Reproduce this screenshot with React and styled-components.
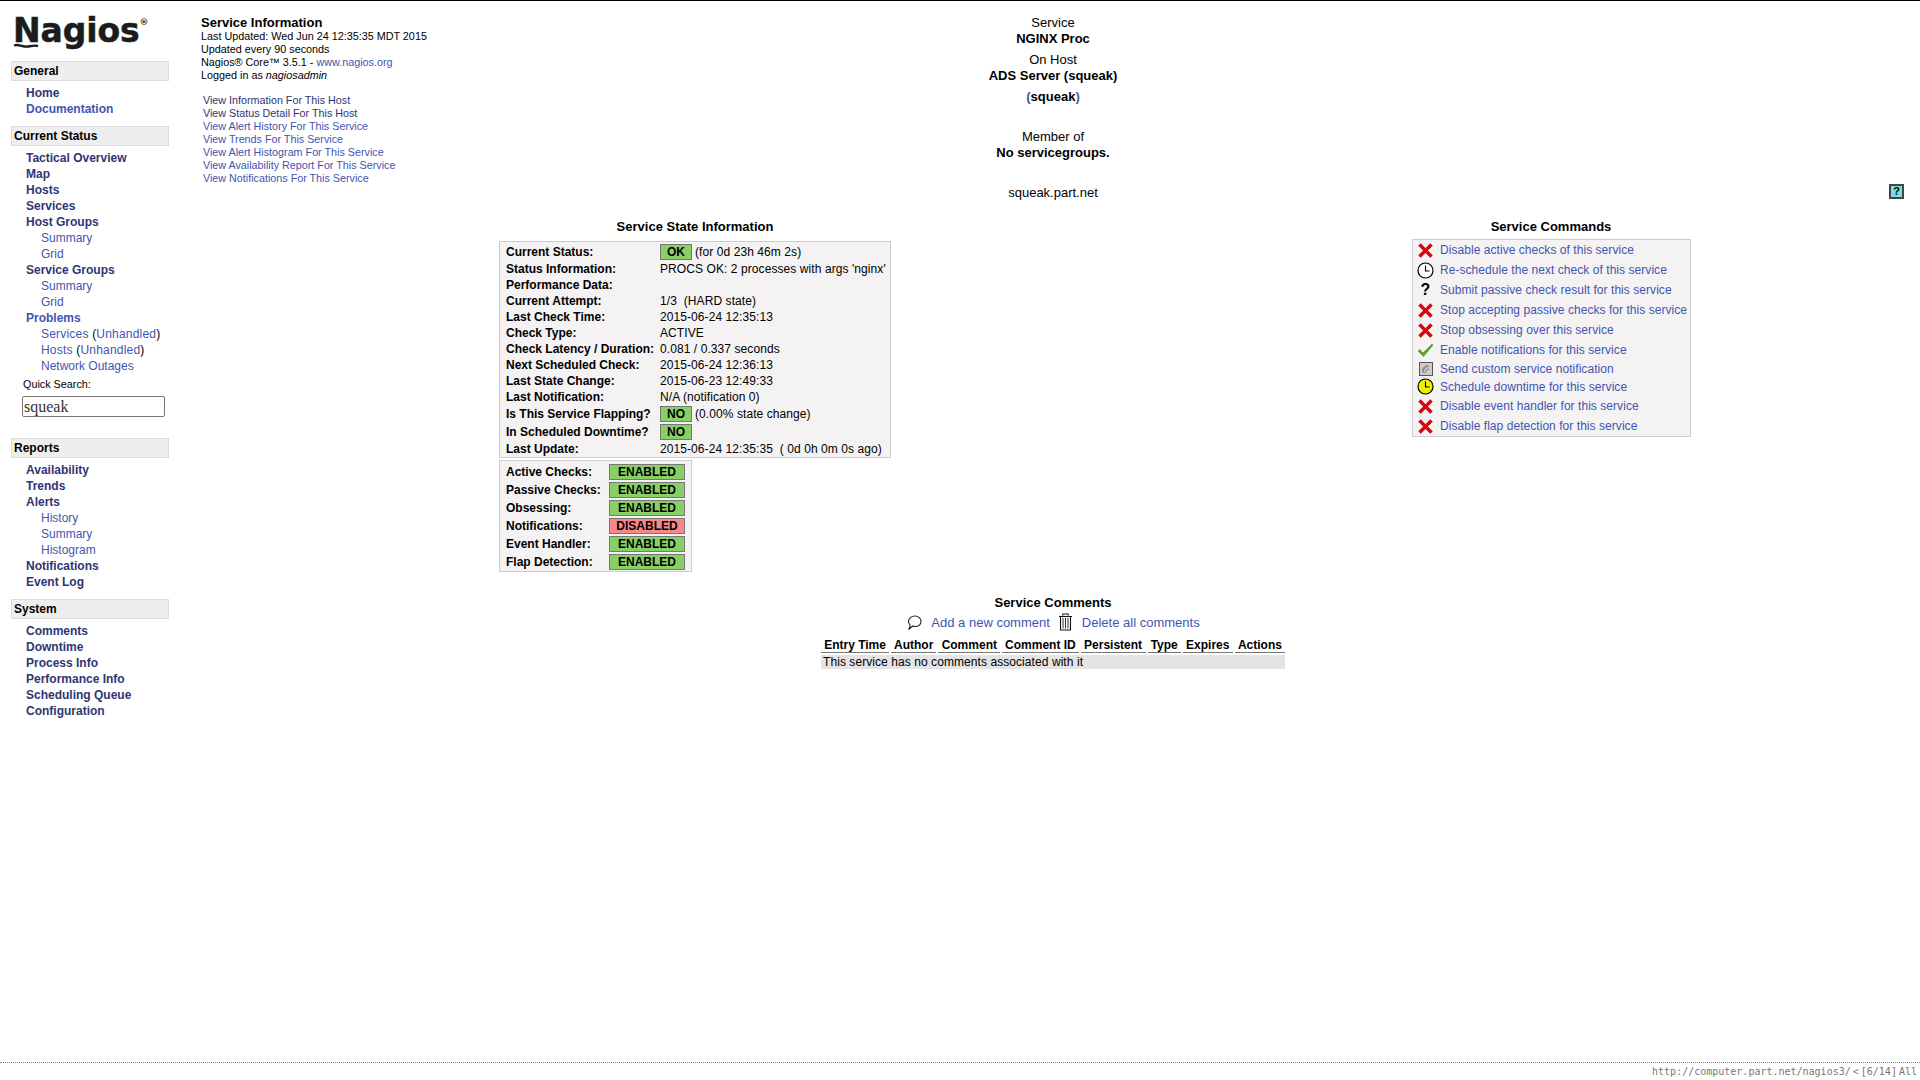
import React from "react";
import styled, { createGlobalStyle } from "styled-components";

const VISITED = "#2f3573";
const LINK = "#3f55b0";

const GlobalStyle = createGlobalStyle`
  html, body {
    margin: 0;
    padding: 0;
    background: #fff;
    overflow: hidden;
  }
  body {
    font-family: "Liberation Sans", Arial, sans-serif;
    color: #000;
  }
  * {
    box-sizing: border-box;
  }
`;

const Page = styled.div`
  height: 1080px;
  display: flex;
  flex-direction: column;
  border-top: 1px solid #000;
`;

const Body = styled.div`
  flex: 1;
  display: flex;
  min-height: 0;
`;

const Sidebar = styled.nav`
  width: 190px;
  flex: none;
  padding: 13px 0 0 11px;
`;

const LogoWrap = styled.div`
  position: relative;
  height: 47px;
  width: 150px;
`;

const LogoText = styled.div`
  font-family: "DejaVu Sans", sans-serif;
  font-weight: 700;
  font-size: 33px;
  line-height: 34px;
  letter-spacing: -0.1px;
  padding-left: 2px;
  color: #1c1c1c;
  -webkit-text-stroke: 0.5px #1c1c1c;
  sup {
    font-size: 9px;
    line-height: 0;
    letter-spacing: 0;
    vertical-align: 17px;
    -webkit-text-stroke: 0;
  }
`;

const LogoSwoosh = styled.svg`
  position: absolute;
  left: 2px;
  top: 28px;
`;

const NavHeader = styled.div`
  width: 158px;
  height: 20px;
  background: #eee;
  border: 1px solid #ddd;
  font-size: 12px;
  font-weight: 700;
  line-height: 18px;
  padding-left: 2px;
  margin-top: ${(p) => p.$top || 0}px;
`;

const NavList = styled.div`
  padding-top: 4px;
`;

const NavRow = styled.div`
  height: 16px;
  line-height: 16px;
  font-size: 12px;
  padding-left: ${(p) => (p.$sub ? 30 : 15)}px;
  font-weight: ${(p) => (p.$sub ? 400 : 700)};
  color: ${(p) => (p.$fresh ? LINK : VISITED)};
  letter-spacing: ${(p) => (p.$wide ? "0.2px" : "0")};
  white-space: nowrap;
`;

const Paren = styled.span`
  color: #000;
`;

const Fresh = styled.span`
  color: ${LINK};
`;

const SearchLabel = styled.div`
  font-size: 10.8px;
  line-height: 12px;
  padding: 4px 0 0 12px;
`;

const SearchInput = styled.input`
  display: block;
  width: 143px;
  height: 21px;
  margin: 6px 0 0 11px;
  padding: 0 1px;
  border: 1px solid #777;
  border-radius: 2px;
  background: #fff;
  font-family: "Liberation Serif", serif;
  font-size: 16px;
  color: #333;
`;

const Main = styled.main`
  flex: 1;
  min-width: 0;
`;

const TopRow = styled.div`
  display: grid;
  grid-template-columns: 1fr 1fr;
  height: 212px;
  position: relative;
  width: 1726px;
`;

const InfoPanel = styled.div`
  padding: 15px 0 0 11px;
  grid-column: 1 / 3;
  grid-row: 1;
`;

const InfoTitle = styled.div`
  font-size: 13px;
  font-weight: 700;
  line-height: 14px;
`;

const InfoLine = styled.div`
  font-size: 10.8px;
  line-height: 13px;
  white-space: nowrap;
  i {
    font-style: italic;
  }
`;

const ViewLinks = styled.div`
  margin: 12px 0 0 2px;
`;

const ViewLink = styled.div`
  font-size: 10.75px;
  line-height: 13px;
  color: ${(p) => (p.$fresh ? LINK : VISITED)};
`;

const HostPanel = styled.div`
  grid-column: 1 / 3;
  grid-row: 1;
  text-align: center;
  padding-top: 14px;
  font-size: 13px;
`;

const HostLine = styled.div`
  line-height: 16px;
  margin-top: ${(p) => p.$top || 0}px;
  font-weight: ${(p) => (p.$bold ? 700 : 400)};
`;

const HelpIcon = styled.div`
  position: absolute;
  right: 12px;
  top: 183px;
  width: 15px;
  height: 15px;
  border: 2px solid #444;
  background: #76dde0;
  color: #000;
  font-size: 11px;
  font-weight: 700;
  line-height: 11px;
  text-align: center;
`;

const StateRow = styled.div`
  display: grid;
  grid-template-columns: 1010px 702px;
  height: 383px;
`;

const StateColumn = styled.section`
  display: flex;
  flex-direction: column;
  align-items: flex-start;
`;

const SectionTitle = styled.div`
  align-self: stretch;
  text-align: center;
  font-size: 13px;
  font-weight: 700;
  line-height: 14px;
  padding-top: 7px;
`;

const GreyBox = styled.div`
  background: #f4f2f2;
  border: 1px solid #ccc;
  margin-left: ${(p) => p.$left}px;
  margin-top: ${(p) => p.$top || 0}px;
  width: ${(p) => p.$width}px;
  height: ${(p) => p.$height}px;
  padding: ${(p) => p.$pad || "0 0 0 6px"};
  font-size: 12px;
`;

const KeyRow = styled.div`
  display: grid;
  grid-template-columns: ${(p) => p.$cols || "154px 1fr"};
  align-items: center;
  height: ${(p) => p.$h || 16}px;
  white-space: nowrap;
`;

const KeyLabel = styled.span`
  font-weight: 700;
  color: #000;
`;

const KeyValue = styled.span`
  display: flex;
  align-items: center;
  gap: 3px;
  white-space: pre;
  letter-spacing: 0.08px;
`;

const Badge = styled.span`
  display: inline-block;
  width: ${(p) => p.$w || 32}px;
  height: 16px;
  line-height: 14px;
  text-align: center;
  font-weight: 700;
  font-size: 12px;
  letter-spacing: 0;
  border: 1px solid #777;
  background: ${(p) => (p.$bad ? "#f88888" : "#88d066")};
`;

const CommandRow = styled.div`
  display: flex;
  align-items: center;
  height: ${(p) => p.$h || 20}px;
  color: ${LINK};
  letter-spacing: 0.05px;
  white-space: nowrap;
`;

const CommandIcon = styled.span`
  width: 27px;
  flex: none;
  display: flex;
  justify-content: center;
  padding-right: 2px;
`;

const QuestionGlyph = styled.span`
  font-size: 16px;
  font-weight: 700;
  line-height: 16px;
  color: #000;
`;

const CommentsSection = styled.section`
  display: flex;
  flex-direction: column;
  align-items: center;
  width: 1726px;
`;

const CommentsTitle = styled.div`
  font-size: 13px;
  font-weight: 700;
  line-height: 14px;
`;

const CommentLinks = styled.div`
  display: flex;
  align-items: center;
  height: 20px;
  margin-top: 2px;
  font-size: 13px;
  color: ${LINK};
  gap: 8px;
  white-space: nowrap;
`;

const CommentAction = styled.span`
  display: flex;
  align-items: center;
  gap: 9px;
`;

const CommentTable = styled.table`
  border-collapse: separate;
  border-spacing: 2px 2px;
  margin-top: 4px;
  font-size: 12px;
  width: 468px;
  table-layout: fixed;
`;

const CommentHead = styled.th`
  font-weight: 700;
  line-height: 13px;
  height: 15px;
  padding: 0;
  width: ${(p) => p.$w}px;
  text-align: center;
  border-bottom: 1px solid #777;
`;

const CommentEmpty = styled.td`
  background: #e4e4e4;
  height: 14px;
  line-height: 14px;
  padding: 0 2px;
  letter-spacing: 0.07px;
  color: #000;
`;

const StatusBar = styled.footer`
  height: 18px;
  flex: none;
  border-top: 1px dotted #888;
  text-align: right;
  padding: 2px 3px 0 0;
  font-family: "DejaVu Sans Mono", monospace;
  font-size: 10px;
  line-height: 13px;
  color: #777;
  word-spacing: -4px;
`;

const CrossIcon = () => (
  <svg width="17" height="17" viewBox="0 0 16 16">
    <path
      d="M1.500 3.500 3.500 1.500 8 6l4.500-4.500 2 2L10 8l4.500 4.500-2 2L8 10l-4.500 4.500-2-2L6 8z"
      fill="#e6000a"
      stroke="#a00008"
      strokeWidth="0.500"
    />
  </svg>
);

const ClockIcon = ({ fill }) => (
  <svg width="17" height="17" viewBox="0 0 17 17">
    <circle cx="8.500" cy="8.500" r="7.500" fill={fill} stroke="#000" strokeWidth="1.200" />
    <path d="M8.500 3.500V9H12.500" fill="none" stroke="#000" strokeWidth="1.100" />
  </svg>
);

const CheckIcon = () => (
  <svg width="17" height="14" viewBox="0 0 17 14">
    <path d="M1 8 3 6.500 6 10 15 1l1 1L6.500 13.500z" fill="#5aaa14" stroke="#3a7f10" strokeWidth="0.500" />
  </svg>
);

const NotifyIcon = () => (
  <svg width="14" height="14" viewBox="0 0 14 14">
    <rect x="0.500" y="0.500" width="13" height="13" fill="#ccc" stroke="#555" />
    <path d="M4 11C4 7.500 6.500 4.500 10 4M6 11C6 9 8 7 10 7M3.500 8.500C4 6 6 3.500 8 3" fill="none" stroke="#555" strokeWidth="0.800" />
  </svg>
);

const BubbleIcon = () => (
  <svg width="16" height="17" viewBox="0 0 16 17">
    <path
      d="M9 2C12.500 2 15 4.500 15 7.500 15 10.500 12.500 12.500 9.500 12.500 8.500 12.500 7.500 12.300 6.800 12L2.500 15.500C4 13.500 4.300 12 4 10.800 3 9.700 2.500 8.700 2.500 7.500 2.500 4.500 5.500 2 9 2Z"
      fill="#fff"
      stroke="#222"
      strokeWidth="1.100"
    />
  </svg>
);

const TrashIcon = () => (
  <svg width="15" height="18" viewBox="0 0 15 18">
    <path d="M1 3.500H14M4.500 2.500 5 1H10L10.500 2.500" fill="none" stroke="#111" strokeWidth="1.200" />
    <path d="M2.500 4V17H12.500V4" fill="#fff" stroke="#111" strokeWidth="1.100" />
    <path d="M5 5V15.500M7.500 5V15.500M10 5V15.500" stroke="#333" strokeWidth="1" />
  </svg>
);

const navGeneral = [
  { label: "Home" },
  { label: "Documentation", fresh: true },
];

const navStatus = [
  { label: "Tactical Overview" },
  { label: "Map" },
  { label: "Hosts" },
  { label: "Services" },
  { label: "Host Groups" },
  { label: "Summary", sub: true, fresh: true },
  { label: "Grid", sub: true, fresh: true },
  { label: "Service Groups" },
  { label: "Summary", sub: true, fresh: true },
  { label: "Grid", sub: true, fresh: true },
  { label: "Problems", fresh: true },
];

const navReports = [
  { label: "Availability" },
  { label: "Trends" },
  { label: "Alerts" },
  { label: "History", sub: true, fresh: true },
  { label: "Summary", sub: true, fresh: true },
  { label: "Histogram", sub: true, fresh: true },
  { label: "Notifications" },
  { label: "Event Log" },
];

const navSystem = [
  { label: "Comments" },
  { label: "Downtime" },
  { label: "Process Info" },
  { label: "Performance Info" },
  { label: "Scheduling Queue" },
  { label: "Configuration" },
];

const viewLinks = [
  { label: "View Information For This Host" },
  { label: "View Status Detail For This Host" },
  { label: "View Alert History For This Service", fresh: true },
  { label: "View Trends For This Service", fresh: true },
  { label: "View Alert Histogram For This Service", fresh: true },
  { label: "View Availability Report For This Service", fresh: true },
  { label: "View Notifications For This Service", fresh: true },
];

const stateRows = [
  { label: "Current Status:", badge: "OK", text: "(for 0d 23h 46m 2s)", h: 19 },
  { label: "Status Information:", text: "PROCS OK: 2 processes with args 'nginx'" },
  { label: "Performance Data:", text: "" },
  { label: "Current Attempt:", text: "1/3  (HARD state)" },
  { label: "Last Check Time:", text: "2015-06-24 12:35:13" },
  { label: "Check Type:", text: "ACTIVE" },
  { label: "Check Latency / Duration:", text: "0.081 / 0.337 seconds" },
  { label: "Next Scheduled Check:", text: "2015-06-24 12:36:13" },
  { label: "Last State Change:", text: "2015-06-23 12:49:33" },
  { label: "Last Notification:", text: "N/A (notification 0)" },
  { label: "Is This Service Flapping?", badge: "NO", text: "(0.00% state change)", h: 18 },
  { label: "In Scheduled Downtime?", badge: "NO", text: "", h: 18 },
  { label: "Last Update:", text: "2015-06-24 12:35:35  ( 0d 0h 0m 0s ago)" },
];

const toggles = [
  ["Active Checks:", "ENABLED"],
  ["Passive Checks:", "ENABLED"],
  ["Obsessing:", "ENABLED"],
  ["Notifications:", "DISABLED"],
  ["Event Handler:", "ENABLED"],
  ["Flap Detection:", "ENABLED"],
];

const commands = [
  { icon: <CrossIcon />, label: "Disable active checks of this service" },
  { icon: <ClockIcon fill="#fff" />, label: "Re-schedule the next check of this service" },
  { icon: <QuestionGlyph>?</QuestionGlyph>, label: "Submit passive check result for this service" },
  { icon: <CrossIcon />, label: "Stop accepting passive checks for this service" },
  { icon: <CrossIcon />, label: "Stop obsessing over this service" },
  { icon: <CheckIcon />, label: "Enable notifications for this service" },
  { icon: <NotifyIcon />, label: "Send custom service notification", h: 17 },
  { icon: <ClockIcon fill="#eeee00" />, label: "Schedule downtime for this service", h: 19 },
  { icon: <CrossIcon />, label: "Disable event handler for this service" },
  { icon: <CrossIcon />, label: "Disable flap detection for this service" },
];

const commentCols = [
  ["Entry Time", 68],
  ["Author", 45],
  ["Comment", 62],
  ["Comment ID", 76],
  ["Persistent", 65],
  ["Type", 33],
  ["Expires", 50],
  ["Actions", 50],
];

const NavItems = ({ items }) =>
  items.map((item, i) => (
    <NavRow key={i} $sub={item.sub} $fresh={item.fresh}>
      {item.label}
    </NavRow>
  ));

export default function App() {
  return (
    <Page>
      <GlobalStyle />
      <Body>
        <Sidebar>
          <LogoWrap>
            <LogoText>
              Nagios<sup>®</sup>
            </LogoText>
            <LogoSwoosh width="26" height="8" viewBox="0 0 26 8">
              <path d="M1 3.500C6 1.500 10 5.500 15 4.500 19 3.800 22 3 25 4" fill="none" stroke="#1c1c1c" strokeWidth="2.400" />
            </LogoSwoosh>
          </LogoWrap>
          <NavHeader>General</NavHeader>
          <NavList>
            <NavItems items={navGeneral} />
          </NavList>
          <NavHeader $top={9}>Current Status</NavHeader>
          <NavList>
            <NavItems items={navStatus} />
            <NavRow $sub $fresh $wide>
              Services <Paren>(</Paren>Unhandled<Paren>)</Paren>
            </NavRow>
            <NavRow $sub $fresh $wide>
              Hosts <Paren>(</Paren>Unhandled<Paren>)</Paren>
            </NavRow>
            <NavRow $sub $fresh>
              Network Outages
            </NavRow>
            <SearchLabel>Quick Search:</SearchLabel>
            <SearchInput defaultValue="squeak" readOnly />
          </NavList>
          <NavHeader $top={21}>Reports</NavHeader>
          <NavList>
            <NavItems items={navReports} />
          </NavList>
          <NavHeader $top={9}>System</NavHeader>
          <NavList>
            <NavItems items={navSystem} />
          </NavList>
        </Sidebar>

        <Main>
          <TopRow>
            <InfoPanel>
              <InfoTitle>Service Information</InfoTitle>
              <InfoLine>Last Updated: Wed Jun 24 12:35:35 MDT 2015</InfoLine>
              <InfoLine>Updated every 90 seconds</InfoLine>
              <InfoLine>
                Nagios® Core™ 3.5.1 - <Fresh>www.nagios.org</Fresh>
              </InfoLine>
              <InfoLine>
                Logged in as <i>nagiosadmin</i>
              </InfoLine>
              <ViewLinks>
                {viewLinks.map((link) => (
                  <ViewLink key={link.label} $fresh={link.fresh}>
                    {link.label}
                  </ViewLink>
                ))}
              </ViewLinks>
            </InfoPanel>
            <HostPanel>
              <HostLine>Service</HostLine>
              <HostLine $bold>NGINX Proc</HostLine>
              <HostLine $top={5}>On Host</HostLine>
              <HostLine $bold>ADS Server (squeak)</HostLine>
              <HostLine $bold $top={5}>
                <Fresh>(</Fresh>squeak<Fresh>)</Fresh>
              </HostLine>
              <HostLine $top={24}>Member of</HostLine>
              <HostLine $bold>No servicegroups.</HostLine>
              <HostLine $top={24}>squeak.part.net</HostLine>
            </HostPanel>
            <HelpIcon>?</HelpIcon>
          </TopRow>

          <StateRow>
            <StateColumn>
              <SectionTitle>Service State Information</SectionTitle>
              <GreyBox $left={309} $top={7} $width={392} $height={217}>
                {stateRows.map((row) => (
                  <KeyRow key={row.label} $h={row.h} $cols="154px 1fr">
                    <KeyLabel>{row.label}</KeyLabel>
                    <KeyValue>
                      {row.badge && <Badge>{row.badge}</Badge>}
                      {row.text}
                    </KeyValue>
                  </KeyRow>
                ))}
              </GreyBox>
              <GreyBox $left={309} $top={2} $width={193} $height={112} $pad="2px 0 0 6px">
                {toggles.map(([label, value]) => (
                  <KeyRow key={label} $h={18} $cols="103px 1fr">
                    <KeyLabel>{label}</KeyLabel>
                    <Badge $w={76} $bad={value === "DISABLED"}>
                      {value}
                    </Badge>
                  </KeyRow>
                ))}
              </GreyBox>
            </StateColumn>
            <StateColumn>
              <SectionTitle>Service Commands</SectionTitle>
              <GreyBox $left={212} $top={5} $width={279} $height={198} $pad="0">
                {commands.map((cmd) => (
                  <CommandRow key={cmd.label} $h={cmd.h}>
                    <CommandIcon>{cmd.icon}</CommandIcon>
                    {cmd.label}
                  </CommandRow>
                ))}
              </GreyBox>
            </StateColumn>
          </StateRow>

          <CommentsSection>
            <CommentsTitle>Service Comments</CommentsTitle>
            <CommentLinks>
              <CommentAction>
                <BubbleIcon />
                Add a new comment
              </CommentAction>
              <CommentAction>
                <TrashIcon />
                Delete all comments
              </CommentAction>
            </CommentLinks>
            <CommentTable>
              <thead>
                <tr>
                  {commentCols.map(([label, w]) => (
                    <CommentHead key={label} $w={w}>
                      {label}
                    </CommentHead>
                  ))}
                </tr>
              </thead>
              <tbody>
                <tr>
                  <CommentEmpty colSpan={8}>This service has no comments associated with it</CommentEmpty>
                </tr>
              </tbody>
            </CommentTable>
          </CommentsSection>
        </Main>
      </Body>
      <StatusBar>http://computer.part.net/nagios3/ &lt; [6/14] All</StatusBar>
    </Page>
  );
}
